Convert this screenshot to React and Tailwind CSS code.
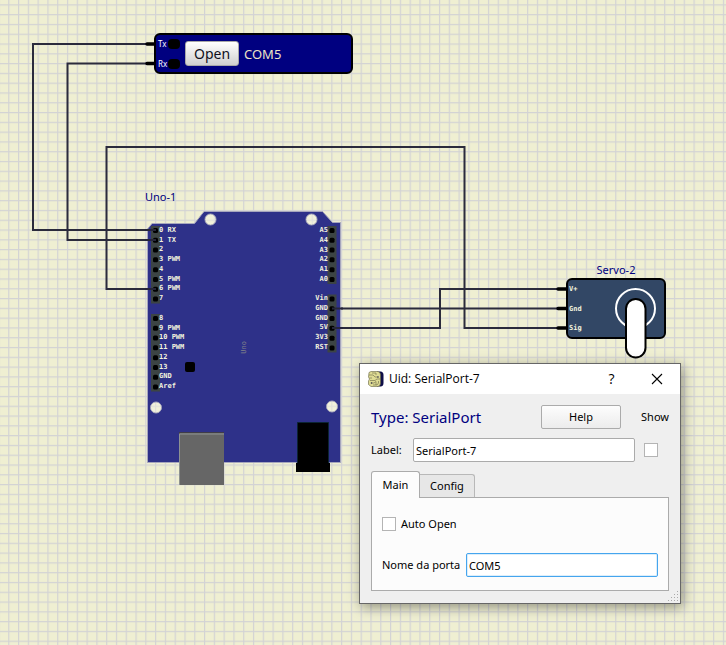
import React from "react";

const WIRES = [
  "M146 44H33V230H156",
  "M146 63.5H67.5V240H156",
  "M156 289H106.5V147H464.5V328H557",
  "M332 308.5H557",
  "M332 328H440V289H557",
];

const LEFT_TOP = ["0 RX", "1 TX", "2", "3 PWM", "4", "5 PWM", "6 PWM", "7"];
const LEFT_BOTTOM = ["8", "9 PWM", "10 PWM", "11 PWM", "12", "13", "GND", "Aref"];
const RIGHT_TOP = ["A5", "A4", "A3", "A2", "A1", "A0"];
const RIGHT_BOTTOM = ["Vin", "GND", "GND", "5V", "3V3", "RST"];

function CanvasGrid() {
  return (
    <svg className="absolute inset-0 h-full w-full" aria-hidden="true">
      <defs>
        <pattern id="grid" x="8.2" y="4.3" width="9.79" height="9.79" patternUnits="userSpaceOnUse">
          <path d="M0 .6H9.79M.6 0V9.79" stroke="#d3d3d4" strokeWidth="1.2" fill="none" />
        </pattern>
      </defs>
      <rect width="100%" height="100%" fill="url(#grid)" />
    </svg>
  );
}

function Wires() {
  return (
    <svg className="absolute inset-0 h-full w-full" aria-hidden="true">
      <g fill="none" stroke="#2b2b3c" strokeWidth="2">
        {WIRES.map((d) => (
          <path key={d} d={d} />
        ))}
      </g>
      <g stroke="#000" strokeWidth="3.5" strokeLinecap="round">
        <path d="M147 44H156M147 63.5H156M558 289H568M558 308.5H568M558 328H568" />
      </g>
    </svg>
  );
}

function SerialPort() {
  return (
    <section className="absolute left-[154px] top-[33px] flex h-[41px] w-[199px] items-center rounded-md border-2 border-black bg-[#000080] pl-[2px]">
      <div className="flex w-[22px] flex-col gap-[8px] text-[8px] leading-[12px] text-white">
        <div className="flex items-center justify-between">
          <span className="w-[10px]">Tx</span>
          <span className="h-[10px] w-[12px] shrink-0 rounded bg-black" />
        </div>
        <div className="flex items-center justify-between">
          <span className="w-[10px]">Rx</span>
          <span className="h-[10px] w-[12px] shrink-0 rounded bg-black" />
        </div>
      </div>
      <button className="ml-[5px] h-[25px] w-[54px] rounded-[3px] border border-[#a8a8a8] bg-linear-to-b from-white to-[#d0d0d0] text-[14px] leading-5 text-[#101020]">
        Open
      </button>
      <span className="ml-[5px] text-[13px] leading-5 text-[#ece3c6]">COM5</span>
    </section>
  );
}

function PinLabels({ pins, className }) {
  return (
    <ul className={"absolute flex flex-col justify-between font-['DejaVu_Sans_Mono',monospace] text-[7px] leading-[9px] font-bold text-[#f3f3df] " + className}>
      {pins.map((p, i) => (
        <li key={i} className="whitespace-pre">{p}</li>
      ))}
    </ul>
  );
}

function PinStrip({ x, y, count }) {
  return (
    <g>
      <rect x={x - 4.5} y={y - 4.5} width="9" height={(count - 1) * 9.79 + 9} fill="#3c4444" />
      {Array.from({ length: count }, (_, i) => (
        <rect key={i} x={x - 2.5} y={y - 2.5 + i * 9.79} width="5" height="5" rx="1.5" fill="#000" />
      ))}
    </g>
  );
}

function UnoBoard() {
  return (
    <section className="absolute left-[145px] top-[189px] h-[298px] w-[198px]">
      <h2 className="text-[11px] leading-[16px] text-[#000080]">Uno-1</h2>
      <svg className="absolute inset-0" width="198" height="298" viewBox="145 189 198 298" aria-hidden="true">
        <path
          fillRule="evenodd"
          fill="#2e3189"
          stroke="#a6a6bd"
          strokeWidth="1"
          d="M147.5 229L152 223.5H194.5L204 211.5H322.5L332.5 222.5H340.5V462.5H147.5ZM205 219.5a5.5 5.5 0 1 0 11 0a5.5 5.5 0 1 0 -11 0M306 219.5a5.5 5.5 0 1 0 11 0a5.5 5.5 0 1 0 -11 0M150.500 407.5a5.5 5.5 0 1 0 11 0a5.5 5.5 0 1 0 -11 0M326.5 406.5a5.5 5.5 0 1 0 11 0a5.5 5.5 0 1 0 -11 0"
        />
        <g fill="#f4f4e6" fillOpacity=".4">
          <circle cx="210.5" cy="219.5" r="5" />
          <circle cx="311.5" cy="219.5" r="5" />
          <circle cx="156" cy="407.5" r="5" />
          <circle cx="332" cy="406.5" r="5" />
        </g>
        <PinStrip x={155.5} y={230.5} count={8} />
        <PinStrip x={155.5} y={318.5} count={8} />
        <PinStrip x={332} y={230.5} count={6} />
        <PinStrip x={332} y={299} count={6} />
        <path d="M145 230H156M145 240H156M145 289H156M332 308.5H343M332 328H343" stroke="#26263a" strokeWidth="2" />
        <rect x="185" y="362" width="10" height="10" rx="2" fill="#000" />
        <rect x="179" y="432" width="45" height="53" fill="#666" />
        <path d="M179 432.5H224" stroke="#403c48" />
        <path d="M180 434H224M179.5 434V485" stroke="#8d9292" />
        <path d="M297.5 422.5H328.5V463H329.5V471.5H296.5V463H297.5Z" fill="#000" stroke="#0c2434" />
        <path d="M296 463H330V472H296Z" fill="#000" />
      </svg>
      <PinLabels pins={LEFT_TOP} className="left-[14px] top-[37px] h-[77px]" />
      <PinLabels pins={LEFT_BOTTOM} className="left-[14px] top-[125px] h-[77px]" />
      <PinLabels pins={RIGHT_TOP} className="right-[15px] top-[37px] h-[58px] text-right" />
      <PinLabels pins={RIGHT_BOTTOM} className="right-[15px] top-[105px] h-[58px] text-right" />
      <span className="absolute left-[94px] top-[152px] rotate-180 font-['DejaVu_Sans_Mono',monospace] text-[7px] leading-[10px] text-[#85858a] [writing-mode:vertical-rl]">
        Uno
      </span>
    </section>
  );
}

function Servo() {
  return (
    <section className="absolute left-[566px] top-[262px] w-[100px]">
      <h2 className="text-center text-[11px] leading-[16px] text-[#000080]">Servo-2</h2>
      <div className="h-[61px] rounded-md border-2 border-black bg-[#324765] pl-px">
        <ul className="flex h-full flex-col justify-between py-[4px] font-['DejaVu_Sans_Mono',monospace] text-[7px] leading-[10px] font-bold text-[#f3f3df]">
          <li>V+</li>
          <li>Gnd</li>
          <li>Sig</li>
        </ul>
      </div>
      <svg className="absolute left-[48px] top-[24px]" width="44" height="74" viewBox="614 286 44 74" aria-hidden="true">
        <circle cx="635.5" cy="308.5" r="19.5" fill="none" stroke="#fff" strokeWidth="2" />
        <rect x="626" y="299" width="19.5" height="58.5" rx="9.75" fill="#fff" stroke="#000" strokeWidth="2" />
      </svg>
    </section>
  );
}

function AppIcon() {
  return (
    <svg width="16" height="16" viewBox="0 0 16 16" aria-hidden="true">
      <path d="M9 .5H13Q15.500 1 15.500 4V12Q15.500 15 13 15.500H9Z" fill="#0e0e48" />
      <path d="M1 1.500L3 .5H10Q12.500 1 12.500 4V12Q12.500 15 10 15.500H3L.5 13.500V10L1.500 8L.5 6Z" fill="#dedb94" stroke="#65633f" strokeWidth=".6" />
      <path d="M1 4H5L7 6H10M1.500 7H4M2 9.500H7L9 8H12M3 12H6L8 10.500V14M4 2H8V4M5 14H9L10.500 12V10" fill="none" stroke="#6a6848" strokeWidth=".6" />
      <circle cx="10" cy="6" r=".8" fill="#33334a" />
      <circle cx="3.500" cy="12" r=".8" fill="#33334a" />
    </svg>
  );
}

const checkbox = "block h-[14px] w-[14px] appearance-none border border-[#b4b4b4] bg-white checked:bg-[#308cc6]";

function PropertiesDialog() {
  return (
    <div
      role="dialog"
      aria-labelledby="dialog-title"
      className="absolute left-[359px] top-[363px] w-[322px] border border-[#666] bg-[#efefef] pb-[12px] text-[11px] leading-[16px] text-black shadow-[2px_3px_12px_rgba(0,0,0,0.4)]"
    >
      <header className="flex h-[30px] items-center bg-white pl-[8px]">
        <AppIcon />
        <h1 id="dialog-title" className="ml-[5px] flex-1 font-['Open_Sans',sans-serif] text-[12px]">
          Uid: SerialPort-7
        </h1>
        <button aria-label="Help" className="flex h-full w-[45px] items-center justify-center font-['Open_Sans',sans-serif] text-[14px]">
          ?
        </button>
        <button aria-label="Close" className="flex h-full w-[46px] items-center justify-center">
          <svg width="12" height="12" viewBox="0 0 12 12" aria-hidden="true">
            <path d="M1 1L11 11M11 1L1 11" stroke="#000" strokeWidth="1.1" />
          </svg>
        </button>
      </header>

      <div className="px-[11px] pt-[11px]">
        <div className="flex h-[24px] items-center">
          <h2 className="flex-1 text-[15px] leading-[24px] text-[#000080]">Type: SerialPort</h2>
          <button className="h-[24px] w-[80px] rounded-[2px] border border-[#ababab] bg-linear-to-b from-[#fdfdfd] to-[#ececec]">
            Help
          </button>
          <label htmlFor="show" className="w-[48px] text-right">Show</label>
        </div>

        <div className="mt-[9px] flex h-[24px] items-center">
          <label htmlFor="uid-label" className="w-[42px]">Label:</label>
          <input
            id="uid-label"
            defaultValue="SerialPort-7"
            className="h-[24px] min-w-0 flex-1 rounded-[2px] border border-[#ababab] bg-white px-[2px] outline-none"
          />
          <input id="show" type="checkbox" className={checkbox + " mr-[11px] ml-[9px]"} />
        </div>

        <div role="tablist" className="mt-[9px] flex items-end">
          <button role="tab" aria-selected="true" className="z-10 -mb-px h-[27px] w-[49px] rounded-t-[3px] border border-b-0 border-[#ababab] bg-[#fcfcfc]">
            Main
          </button>
          <button role="tab" aria-selected="false" className="h-[23px] w-[55px] rounded-tr-[3px] border border-b-0 border-l-0 border-[#b8b8b8] bg-[#e7e7e7]">
            Config
          </button>
        </div>
        <div role="tabpanel" className="border border-[#ababab] bg-[#fcfcfc] px-[10px] pt-[18px] pb-[13px]">
          <div className="flex items-center gap-[5px]">
            <input id="auto-open" type="checkbox" className={checkbox} />
            <label htmlFor="auto-open">Auto Open</label>
          </div>
          <div className="mt-[21px] flex items-center">
            <label htmlFor="port" className="w-[84px]">Nome da porta</label>
            <input
              id="port"
              defaultValue="COM5"
              className="h-[24px] min-w-0 flex-1 rounded-[2px] border border-[#45a5ee] bg-white px-[2px] shadow-[inset_0_0_0_1px_#dceefa] outline-none"
            />
          </div>
        </div>
      </div>

      <svg className="absolute right-[1px] bottom-[1px]" width="11" height="11" viewBox="0 0 11 11" aria-hidden="true">
        <path d="M9 0h1v1h-1zM6 3h1v1h-1zM9 3h1v1h-1zM3 6h1v1h-1zM6 6h1v1h-1zM9 6h1v1h-1zM0 9h1v1h-1zM3 9h1v1h-1zM6 9h1v1h-1zM9 9h1v1h-1z" fill="#aaa" />
      </svg>
    </div>
  );
}

export default function App() {
  return (
    <main className="relative min-h-screen w-full overflow-hidden bg-[#efefd2] font-['Noto_Sans',sans-serif]">
      <CanvasGrid />
      <Wires />
      <SerialPort />
      <UnoBoard />
      <Servo />
      <PropertiesDialog />
    </main>
  );
}
